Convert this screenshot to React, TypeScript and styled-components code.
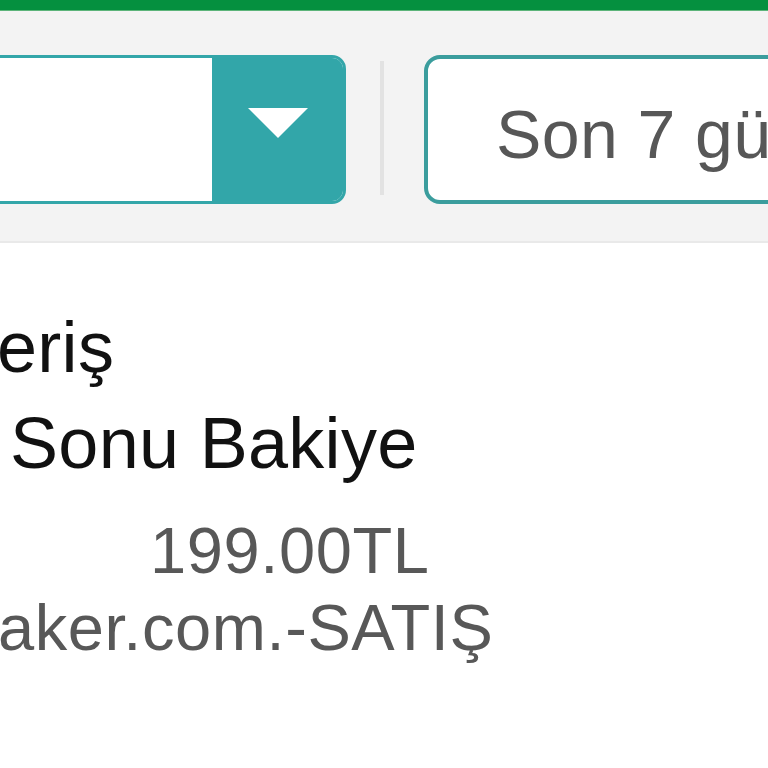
import React from "react";
import styled, { createGlobalStyle } from "styled-components";

const Global = createGlobalStyle`
  html, body { margin: 0; padding: 0; background: #ffffff; overflow: hidden; }
  body { font-family: "Liberation Sans", Arial, Helvetica, sans-serif; }
  #root { width: 768px; height: 768px; overflow: hidden; }
`;

const Page = styled.div`
  width: 768px;
  height: 768px;
  overflow: hidden;
  background: #ffffff;
  display: flex;
  flex-direction: column;
`;

const TopBar = styled.div`
  height: 10px;
  background: #05903f;
  border-bottom: 1px solid #5cb47a;
  flex-shrink: 0;
`;

const Toolbar = styled.div`
  display: flex;
  align-items: center;
  background: #f3f3f3;
  border-bottom: 2px solid #e9e9e9;
  padding: 44px 0 37px 0;
  flex-shrink: 0;
`;

const Select = styled.div`
  display: flex;
  width: 400px;
  height: 149px;
  margin-left: -54px;
  flex-shrink: 0;
  box-sizing: border-box;
  border: 3px solid #33a6a9;
  border-radius: 14px;
  overflow: hidden;
  background: #ffffff;
`;

const SelectField = styled.div`
  flex: 1;
  background: #ffffff;
`;

const SelectButton = styled.div`
  width: 131px;
  background: #32a6a9;
  display: flex;
  align-items: center;
  justify-content: center;
  padding-bottom: 14px;
  box-sizing: border-box;
`;

const Divider = styled.div`
  width: 4px;
  height: 134px;
  margin: 0 40px 4px 34px;
  background: #e2e2e2;
  flex-shrink: 0;
`;

const DateBox = styled.div`
  width: 500px;
  height: 149px;
  flex-shrink: 0;
  box-sizing: border-box;
  border: 4px solid #3b9d9d;
  border-radius: 16px;
  background: #ffffff;
  display: flex;
  align-items: center;
  padding: 9px 0 0 68px;
  font-size: 68px;
  letter-spacing: 0.4px;
  color: #575757;
  white-space: nowrap;
`;

const Content = styled.div`
  padding-top: 56px;
  display: flex;
  flex-direction: column;
`;

const Label = styled.div<{ $x: number }>`
  font-size: 72px;
  line-height: 96px;
  letter-spacing: 0.3px;
  color: #111111;
  white-space: nowrap;
  margin-left: ${(p) => p.$x}px;
`;

const Value = styled.div<{ $x: number; $top?: number }>`
  font-size: 65px;
  line-height: 77px;
  letter-spacing: 0.6px;
  color: #585858;
  white-space: nowrap;
  margin-left: ${(p) => p.$x}px;
  margin-top: ${(p) => p.$top ?? 0}px;
`;

export default function App() {
  return (
    <>
      <Global />
      <Page>
        <TopBar />
        <Toolbar>
          <Select>
            <SelectField />
            <SelectButton>
              <svg width="60" height="30" viewBox="0 0 60 30">
                <polygon points="0,0 60,0 30,30" fill="#ffffff" />
              </svg>
            </SelectButton>
          </Select>
          <Divider />
          <DateBox>Son 7 gün</DateBox>
        </Toolbar>
        <Content>
          <Label $x={-3}>eriş</Label>
          <Label $x={10}>Sonu Bakiye</Label>
          <Value $x={150} $top={21}>199.00TL</Value>
          <Value $x={-2}>aker.com.-SATIŞ</Value>
        </Content>
      </Page>
    </>
  );
}
